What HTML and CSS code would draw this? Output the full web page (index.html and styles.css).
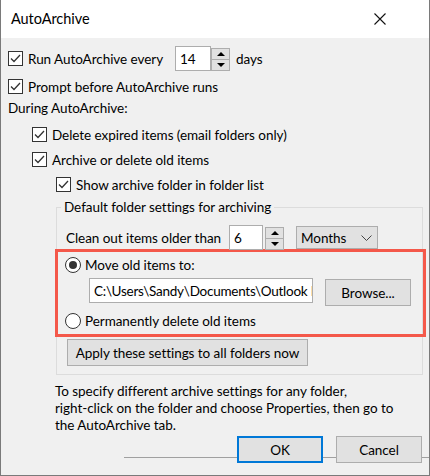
FILE: index.html
```html
<!DOCTYPE html>
<html lang="en">
<head>
<meta charset="UTF-8">
<title>AutoArchive</title>
<link rel="stylesheet" href="styles.css">
</head>
<body>
<div class="dialog">
    <div class="titlebar">
        <span class="title">AutoArchive</span>
        <svg class="close" width="12" height="12" viewBox="0 0 12 12"><path d="M0.5 0.5 L11.5 11.5 M11.5 0.5 L0.5 11.5" stroke="#111" stroke-width="1.1" fill="none"/></svg>
    </div>

    <div class="content">
        <div class="row row-run">
            <label class="check run-label"><span class="box"><svg width="15" height="15" viewBox="0 0 15 15"><path d="M3 7.5 L6 10.5 L12 4" stroke="#333" stroke-width="1.3" fill="none"/></svg></span>Run AutoArchive every</label>
            <div class="spin">
                <div class="field spin-field">14</div>
                <div class="spin-btns"><span class="up"></span><span class="down"></span></div>
            </div>
            <span class="unit">days</span>
        </div>
        <div class="row">
            <label class="check"><span class="box"><svg width="15" height="15" viewBox="0 0 15 15"><path d="M3 7.5 L6 10.5 L12 4" stroke="#333" stroke-width="1.3" fill="none"/></svg></span>Prompt before AutoArchive runs</label>
        </div>
        <div class="caption">During AutoArchive:</div>
        <div class="row row-delete indent1">
            <label class="check"><span class="box"><svg width="15" height="15" viewBox="0 0 15 15"><path d="M3 7.5 L6 10.5 L12 4" stroke="#333" stroke-width="1.3" fill="none"/></svg></span>Delete expired items (email folders only)</label>
        </div>
        <div class="row indent1">
            <label class="check"><span class="box"><svg width="15" height="15" viewBox="0 0 15 15"><path d="M3 7.5 L6 10.5 L12 4" stroke="#333" stroke-width="1.3" fill="none"/></svg></span>Archive or delete old items</label>
        </div>
        <div class="row indent2">
            <label class="check"><span class="box"><svg width="15" height="15" viewBox="0 0 15 15"><path d="M3 7.5 L6 10.5 L12 4" stroke="#333" stroke-width="1.3" fill="none"/></svg></span>Show archive folder in folder list</label>
        </div>

        <fieldset class="group">
            <legend>Default folder settings for archiving</legend>
            <div class="row row-clean">
                <span class="clean-label">Clean out items older than</span>
                <div class="spin">
                    <div class="field clean-field">6</div>
                    <div class="spin-btns"><span class="up"></span><span class="down"></span></div>
                </div>
                <div class="dropdown">
                    <span>Months</span>
                    <svg width="11" height="6" viewBox="0 0 11 6"><path d="M0.5 0.5 L5.5 5.5 L10.5 0.5" stroke="#444" stroke-width="1" fill="none"/></svg>
                </div>
            </div>

            <div class="highlight">
                <label class="radio"><span class="dot checked"></span>Move old items to:</label>
                <div class="path-row">
                    <div class="field path-field">C:\Users\Sandy\Documents\Outlook F</div>
                    <button class="btn browse">Browse...</button>
                </div>
                <label class="radio"><span class="dot"></span>Permanently delete old items</label>
            </div>

            <button class="btn apply">Apply these settings to all folders now</button>
        </fieldset>

        <p class="note">To specify different archive settings for any folder,<br>right-click on the folder and choose Properties, then go to<br>the AutoArchive tab.</p>

        <div class="footer">
            <button class="btn ok">OK</button>
            <button class="btn">Cancel</button>
        </div>
    </div>
</div>
</body>
</html>
```

FILE: styles.css
```css
body {
    margin: 0;
    font-family: Lato, "Liberation Sans", sans-serif;
    font-size: 13.5px;
    letter-spacing: -0.05px;
    color: #000;
    background-color: #f0f0f0;
}
.dialog {
    width: 428px;
    height: 475px;
    border: 1px solid #7a7a7a;
    border-top: none;
    background-color: #f0f0f0;
    overflow: hidden;
}
.titlebar {
    height: 38px;
    background-color: #fff;
    display: flex;
    align-items: center;
    justify-content: space-between;
    padding: 0 43px 0 10px;
}
.title {
    font-size: 14.5px;
    margin-top: -2px;
}
.close {
    display: block;
    margin-top: -1px;
}
.content {
    padding: 8px 0 0 7px;
}
.row {
    display: flex;
    align-items: center;
    height: 25px;
}
.row-run {
    margin-bottom: 3px;
}
.check, .radio {
    display: flex;
    align-items: center;
    white-space: nowrap;
}
.box {
    width: 15px;
    height: 15px;
    border: 1px solid #333;
    background-color: #fff;
    box-sizing: border-box;
    margin-right: 5px;
    display: flex;
}
.box svg {
    margin: -1px;
}
.run-label {
    width: 167px;
}
.spin {
    display: flex;
    align-items: center;
}
.field {
    height: 25px;
    box-sizing: border-box;
    border: 1px solid #adadad;
    background-color: #fff;
    padding: 0 0 0 4px;
    display: flex;
    align-items: center;
    white-space: nowrap;
    overflow: hidden;
}
.spin-field {
    width: 36px;
}
.spin-btns {
    display: flex;
    flex-direction: column;
    margin-top: 2px;
}
.spin-btns span {
    width: 19px;
    height: 12px;
    box-sizing: border-box;
    border: 1px solid #adadad;
    background-color: #e1e1e1;
    display: flex;
    align-items: center;
    justify-content: center;
}
.spin-btns span + span {
    border-top: none;
    height: 11px;
}
.spin-btns .up::before {
    content: '';
    border-left: 4px solid transparent;
    border-right: 4px solid transparent;
    border-bottom: 4px solid #000;
}
.spin-btns .down::before {
    content: '';
    border-left: 4px solid transparent;
    border-right: 4px solid transparent;
    border-top: 4px solid #000;
}
.unit {
    margin-left: 6px;
}
.caption {
    height: 18px;
    line-height: 18px;
    margin-top: 0;
}
.row-delete {
    margin-top: 5px;
}
.indent1 {
    padding-left: 24px;
}
.indent2 {
    padding-left: 48px;
}
.group {
    margin: 1px 0 0 48px;
    width: 367px;
    padding: 0 0 8px 0;
    border: 1px solid #dcdcdc;
    box-sizing: border-box;
    min-width: 0;
}
.group legend {
    padding: 0 3px;
    margin-left: 4px;
    height: 18px;
    line-height: 18px;
}
.row-clean {
    margin-top: 9px;
    padding-left: 9px;
}
.clean-label {
    width: 163px;
    white-space: nowrap;
}
.clean-field {
    width: 34px;
}
.row-clean .spin-btns {
    margin-left: 2px;
}
.dropdown {
    margin-left: 12px;
    width: 82px;
    height: 23px;
    box-sizing: border-box;
    border: 1px solid #adadad;
    background-color: #e1e1e1;
    display: flex;
    align-items: center;
    justify-content: space-between;
    padding: 0 5px 0 4px;
}
.highlight {
    margin: -1px -4px 0 -2px;
    border: 3px solid #f4584a;
    height: 88px;
    box-sizing: border-box;
    padding: 4px 0 0 7px;
}
.dot {
    width: 16px;
    height: 16px;
    border: 1px solid #333;
    border-radius: 50%;
    background-color: #fff;
    box-sizing: border-box;
    margin-right: 4px;
    display: flex;
    align-items: center;
    justify-content: center;
}
.dot.checked::before {
    content: '';
    width: 8px;
    height: 8px;
    border-radius: 50%;
    background-color: #333;
}
.radio {
    height: 18px;
}
.path-row {
    display: flex;
    align-items: flex-start;
    margin: 4px 0 6px 24px;
}
.path-field {
    width: 224px;
    letter-spacing: -0.25px;
}
.btn {
    font-family: inherit;
    font-size: 13.5px;
    letter-spacing: -0.05px;
    color: #000;
    background-color: #e1e1e1;
    border: 1px solid #adadad;
    height: 27px;
    padding: 0;
    box-sizing: border-box;
    white-space: nowrap;
}
.browse {
    width: 86px;
    margin: 1px 0 0 12px;
}
.apply {
    display: block;
    width: 241px;
    margin: 2px 0 0 10px;
}
.note {
    margin: 8px 0 0 47px;
    line-height: 17px;
    white-space: nowrap;
}
.footer {
    display: flex;
    justify-content: flex-end;
    gap: 13px;
    margin-top: 2px;
    padding-right: 7px;
    background: linear-gradient(#a0a0a0, #a0a0a0) no-repeat 116px 21px / 100% 1px;
}
.footer .btn {
    width: 86px;
}
.footer .ok {
    border: 2px solid #0078d7;
}
```
